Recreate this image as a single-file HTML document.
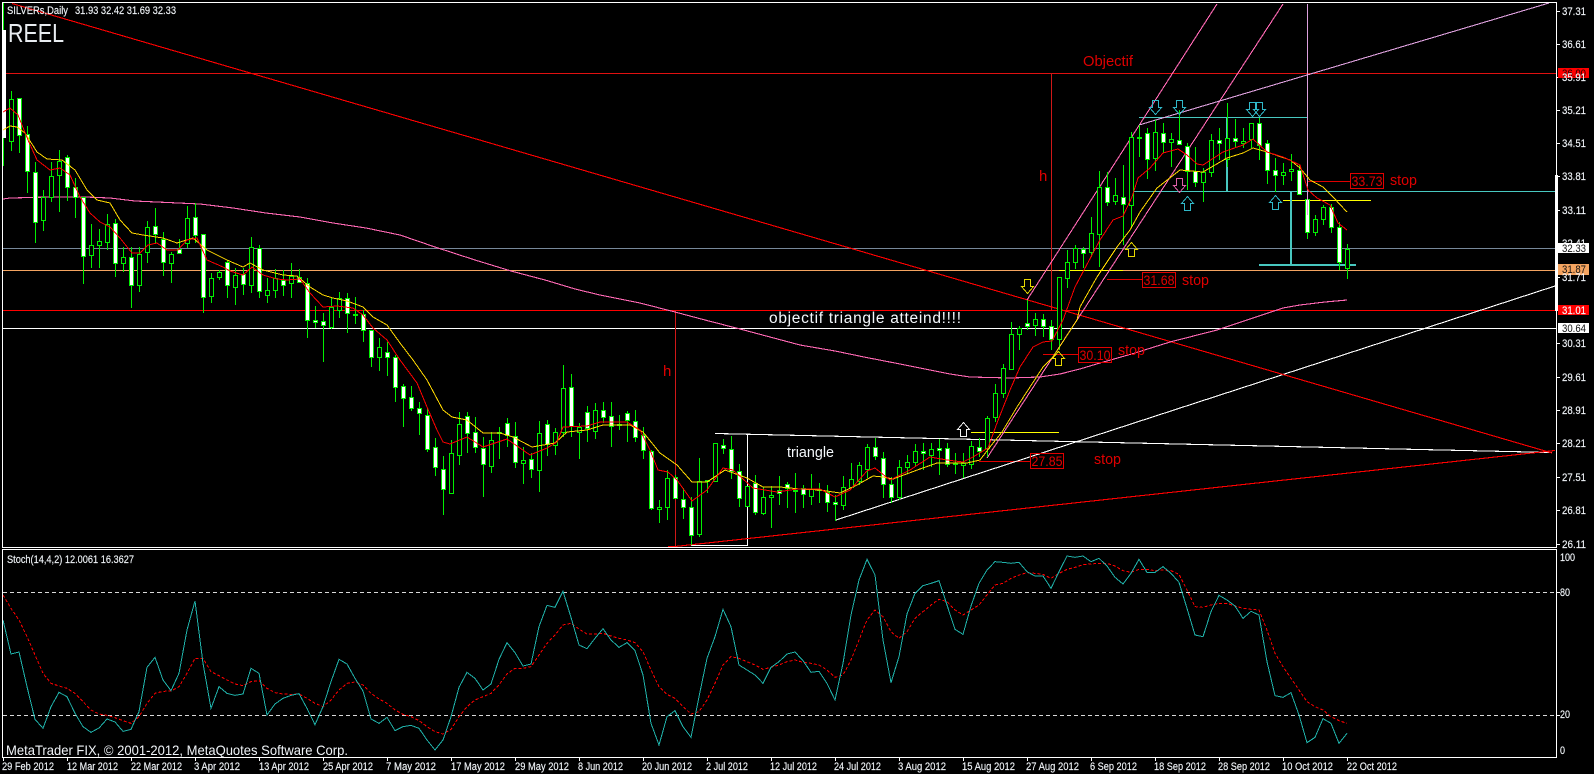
<!DOCTYPE html>
<html><head><meta charset="utf-8"><title>SILVERs Daily</title>
<style>
html,body{margin:0;padding:0;background:#000;width:1594px;height:774px;overflow:hidden}
svg{display:block;position:absolute;left:0;top:0}
text{font-family:"Liberation Sans",sans-serif}
.ax{font-size:11px;fill:#f2f6fa;stroke:#f2f6fa;stroke-width:.15px}
.d{font-size:11px;fill:#f0f4f8;stroke:#f0f4f8;stroke-width:.15px}
.r{font-size:15px;fill:#e00000}
.b{font-size:14px;fill:#e00000}
.w{font-size:15px;fill:#f4f8fc}
</style></head><body>
<svg width="1594" height="774" viewBox="0 0 1594 774" shape-rendering="crispEdges">
<rect width="1594" height="774" fill="#000"/>

<!-- horizontal levels -->
<g fill="none" stroke-width="1">
<path d="M3 73.5H1556" stroke="#e01010"/>
<path d="M3 248.5H1556" stroke="#77889a"/>
<path d="M3 270.5H1556" stroke="#f4a460"/>
<path d="M3 310.5H1556" stroke="#f00"/>
<path d="M3 328.5H1556" stroke="#fff"/>
<path d="M1133 191.5H1555" stroke="#48c8c0"/>
<path d="M1139 117.5H1307" stroke="#48c8c0"/>
<path d="M1283 200.5H1371" stroke="#ffff00"/>
<path d="M1059 270.5H1123" stroke="#ffff00"/>
<path d="M971 432.5H1059" stroke="#ffff00"/>
<!-- verticals -->
<path d="M675.5 310V547" stroke="#d01818"/>
<path d="M1051.5 73V310" stroke="#d01818"/>
<path d="M747.5 435V546" stroke="#fff"/>
<path d="M691 545.5H748" stroke="#fff"/>
<path d="M979 461.5H1030M1043 354.5H1078M1107 279.5H1142M1308 181.5H1350" stroke="#e00000"/>
</g>
<g fill="#48c8c0">
<rect x="1226" y="117" width="2" height="74"/>
<rect x="1290" y="191" width="2" height="74"/>
<rect x="1259" y="264" width="97" height="2"/>
</g>

<!-- trend lines -->
<g fill="none" stroke-width="1.1">
<path d="M715 433.5L1552 452.5" stroke="#fff"/>
<path d="M836 520L1555 286" stroke="#fff"/>
<path d="M12 3.5L1552 453" stroke="#f00"/>
<path d="M668 546.5H675L1555 450.5" stroke="#f00"/>
<path d="M1217 4L1027 300" stroke="#ff69b4"/>
<path d="M1283 4L987 458" stroke="#ff69b4"/>
<path d="M1139 125L1549 3" stroke="#dda0dd"/>
<polyline stroke="#ff69b4" points="3,199 10,198 50,197 85,197 110,198 135,201 200,204 233,208 266,213 300,217 333,223 366,228 400,235 435,247 475,260 511,271 545,280 575,289 600,295 640,303 675,312 705,320 740,329 770,337 800,345 835,351 864,357 900,364 930,370 950,374 970,377 1010,378 1040,377 1060,374 1080,369 1100,363 1135,353 1170,342 1217,330 1250,319 1283,308 1300,305 1325,302 1347,300"/>
</g>

<!-- candle wicks -->
<path fill="none" stroke="#00f000" stroke-width="1" d="M3.5 3V166M11.5 91V151M19.5 98V153M27.5 126V193M35.5 162V243M43.5 190V231M51.5 162V202M59.5 150V212M67.5 155V201M75.5 178V218M83.5 197V284M91.5 224V268M99.5 229V268M107.5 214V250M115.5 219V277M123.5 247V272M131.5 247V308M139.5 247V292M147.5 221V263M155.5 208V243M163.5 232V276M171.5 252V283M179.5 239V254M187.5 206V248M195.5 203V243M203.5 234V313M211.5 273V303M219.5 270V280M227.5 260V298M235.5 268V305M243.5 268V295M251.5 237V293M259.5 245V298M267.5 278V303M275.5 269V298M283.5 270V296M291.5 263V298M299.5 269V283M307.5 278V338M315.5 306V328M323.5 313V362M331.5 298V329M339.5 292V318M347.5 293V333M355.5 297V324M363.5 310V342M371.5 330V367M379.5 338V371M387.5 342V376M395.5 355V402M403.5 384V427M411.5 386V411M419.5 402V435M427.5 408V452M435.5 438V476M443.5 456V515M451.5 440V493M459.5 412V465M467.5 412V453M475.5 417V453M483.5 437V497M491.5 432V473M499.5 427V459M507.5 418V447M515.5 422V468M523.5 447V484M531.5 453V478M539.5 421V492M547.5 420V456M555.5 428V455M563.5 365V437M571.5 374V437M579.5 423V459M587.5 406V442M595.5 403V439M603.5 402V423M611.5 402V447M619.5 415V430M627.5 411V442M635.5 410V442M643.5 427V459M651.5 450V510M659.5 500V523M667.5 470V520M675.5 475V498M683.5 488V519M691.5 497V545M699.5 458V537M707.5 480V493M715.5 443V481M723.5 439V454M731.5 436V479M739.5 464V507M747.5 486V506M755.5 475V515M763.5 487V515M771.5 486V528M779.5 476V505M787.5 482V508M795.5 473V513M803.5 485V508M811.5 474V505M819.5 483V503M827.5 485V512M835.5 495V521M843.5 476V510M851.5 463V488M859.5 462V485M867.5 444V478M875.5 438V460M883.5 452V498M891.5 477V503M899.5 460V500M907.5 455V474M915.5 444V467M923.5 443V470M931.5 443V467M939.5 439V475M947.5 443V467M955.5 453V474M963.5 453V478M971.5 441V469M979.5 438V457M987.5 416V457M995.5 384V422M1003.5 364V398M1011.5 322V369M1019.5 326V350M1027.5 300V330M1035.5 313V336M1043.5 314V337M1051.5 320V350M1059.5 277V350M1067.5 250V288M1075.5 245V269M1083.5 247V268M1091.5 217V257M1099.5 171V267M1107.5 172V206M1115.5 178V205M1123.5 165V245M1131.5 132V228M1139.5 125V157M1147.5 128V179M1155.5 120V171M1163.5 123V153M1171.5 133V167M1179.5 110V145M1187.5 143V190M1195.5 147V187M1203.5 168V202M1211.5 134V177M1219.5 128V160M1227.5 103V167M1235.5 119V148M1243.5 128V148M1251.5 123V148M1259.5 118V160M1267.5 140V184M1275.5 158V192M1283.5 163V185M1291.5 154V181M1299.5 165V195M1307.5 193V239M1315.5 215V236M1323.5 205V225M1331.5 204V233M1339.5 222V270M1347.5 244V279"/>

<!-- bull bodies (hollow) -->
<path fill="#000" stroke="#00f000" stroke-width="1" d="M9.5 99.5h4V141.5h-4zM41.5 197.5h4V220.5h-4zM49.5 176.5h4V197.5h-4zM57.5 161.5h4V175.5h-4zM89.5 245.5h4V255.5h-4zM97.5 241.5h4V245.5h-4zM105.5 224.5h4V242.5h-4zM121.5 257.5h4V263.5h-4zM137.5 254.5h4V285.5h-4zM145.5 227.5h4V252.5h-4zM169.5 254.5h4V263.5h-4zM185.5 218.5h4V243.5h-4zM209.5 278.5h4V296.5h-4zM217.5 272.5h4V277.5h-4zM233.5 275.5h4V287.5h-4zM249.5 247.5h4V285.5h-4zM265.5 290.5h4V295.5h-4zM273.5 278.5h4V290.5h-4zM289.5 276.5h4V283.5h-4zM329.5 307.5h4V327.5h-4zM337.5 298.5h4V310.5h-4zM353.5 314.5h4V315.5h-4zM377.5 347.5h4V357.5h-4zM449.5 453.5h4V493.5h-4zM457.5 424.5h4V455.5h-4zM489.5 440.5h4V466.5h-4zM497.5 432.5h4V433.5h-4zM521.5 460.5h4V463.5h-4zM537.5 433.5h4V470.5h-4zM553.5 432.5h4V445.5h-4zM561.5 388.5h4V432.5h-4zM577.5 427.5h4V432.5h-4zM593.5 410.5h4V431.5h-4zM617.5 424.5h4V425.5h-4zM657.5 507.5h4V509.5h-4zM665.5 478.5h4V507.5h-4zM697.5 481.5h4V534.5h-4zM705.5 480.5h4V481.5h-4zM713.5 443.5h4V481.5h-4zM745.5 486.5h4V506.5h-4zM761.5 497.5h4V513.5h-4zM769.5 495.5h4V497.5h-4zM793.5 490.5h4V491.5h-4zM809.5 489.5h4V496.5h-4zM817.5 489.5h4V490.5h-4zM841.5 487.5h4V505.5h-4zM849.5 479.5h4V487.5h-4zM857.5 465.5h4V481.5h-4zM865.5 447.5h4V469.5h-4zM897.5 467.5h4V497.5h-4zM905.5 462.5h4V467.5h-4zM913.5 451.5h4V462.5h-4zM929.5 449.5h4V455.5h-4zM953.5 463.5h4V464.5h-4zM961.5 463.5h4V465.5h-4zM969.5 446.5h4V464.5h-4zM985.5 418.5h4V448.5h-4zM993.5 393.5h4V417.5h-4zM1001.5 368.5h4V393.5h-4zM1009.5 334.5h4V369.5h-4zM1017.5 328.5h4V334.5h-4zM1033.5 319.5h4V325.5h-4zM1057.5 277.5h4V339.5h-4zM1065.5 262.5h4V278.5h-4zM1073.5 248.5h4V262.5h-4zM1089.5 233.5h4V252.5h-4zM1097.5 187.5h4V234.5h-4zM1113.5 195.5h4V201.5h-4zM1129.5 137.5h4V205.5h-4zM1137.5 137.5h4V138.5h-4zM1153.5 132.5h4V158.5h-4zM1169.5 139.5h4V142.5h-4zM1201.5 172.5h4V182.5h-4zM1209.5 140.5h4V172.5h-4zM1225.5 138.5h4V159.5h-4zM1241.5 141.5h4V143.5h-4zM1249.5 123.5h4V139.5h-4zM1281.5 172.5h4V175.5h-4zM1289.5 169.5h4V171.5h-4zM1313.5 219.5h4V232.5h-4zM1321.5 207.5h4V219.5h-4zM1345.5 249.5h4V268.5h-4z"/>

<!-- bear bodies (white) -->
<path fill="#fff" stroke="#00f000" stroke-width="1" d="M17.5 98.5h4V135.5h-4zM25.5 134.5h4V171.5h-4zM33.5 172.5h4V222.5h-4zM65.5 157.5h4V187.5h-4zM73.5 187.5h4V197.5h-4zM81.5 197.5h4V256.5h-4zM113.5 223.5h4V263.5h-4zM129.5 257.5h4V285.5h-4zM153.5 226.5h4V234.5h-4zM161.5 239.5h4V262.5h-4zM177.5 249.5h4V253.5h-4zM193.5 217.5h4V235.5h-4zM201.5 234.5h4V297.5h-4zM225.5 262.5h4V285.5h-4zM241.5 274.5h4V284.5h-4zM257.5 248.5h4V291.5h-4zM281.5 280.5h4V285.5h-4zM297.5 277.5h4V282.5h-4zM305.5 283.5h4V320.5h-4zM313.5 320.5h4V322.5h-4zM321.5 321.5h4V325.5h-4zM345.5 298.5h4V313.5h-4zM361.5 314.5h4V330.5h-4zM369.5 330.5h4V357.5h-4zM385.5 352.5h4V357.5h-4zM393.5 357.5h4V387.5h-4zM401.5 386.5h4V398.5h-4zM409.5 397.5h4V408.5h-4zM417.5 408.5h4V413.5h-4zM425.5 415.5h4V449.5h-4zM433.5 447.5h4V467.5h-4zM441.5 469.5h4V489.5h-4zM465.5 416.5h4V433.5h-4zM473.5 432.5h4V447.5h-4zM481.5 448.5h4V464.5h-4zM505.5 423.5h4V435.5h-4zM513.5 436.5h4V462.5h-4zM529.5 459.5h4V469.5h-4zM545.5 424.5h4V444.5h-4zM569.5 387.5h4V426.5h-4zM585.5 412.5h4V428.5h-4zM601.5 410.5h4V417.5h-4zM609.5 416.5h4V426.5h-4zM625.5 413.5h4V420.5h-4zM633.5 421.5h4V437.5h-4zM641.5 435.5h4V450.5h-4zM649.5 451.5h4V508.5h-4zM673.5 477.5h4V498.5h-4zM681.5 499.5h4V507.5h-4zM689.5 507.5h4V535.5h-4zM721.5 445.5h4V448.5h-4zM729.5 449.5h4V471.5h-4zM737.5 471.5h4V498.5h-4zM753.5 483.5h4V512.5h-4zM777.5 490.5h4V493.5h-4zM785.5 484.5h4V488.5h-4zM801.5 488.5h4V494.5h-4zM825.5 492.5h4V502.5h-4zM833.5 502.5h4V504.5h-4zM873.5 447.5h4V456.5h-4zM881.5 458.5h4V484.5h-4zM889.5 484.5h4V497.5h-4zM921.5 451.5h4V453.5h-4zM937.5 448.5h4V450.5h-4zM945.5 448.5h4V464.5h-4zM977.5 447.5h4V451.5h-4zM1025.5 323.5h4V326.5h-4zM1041.5 319.5h4V326.5h-4zM1049.5 326.5h4V339.5h-4zM1081.5 249.5h4V253.5h-4zM1105.5 187.5h4V202.5h-4zM1121.5 197.5h4V204.5h-4zM1145.5 133.5h4V159.5h-4zM1161.5 133.5h4V142.5h-4zM1177.5 140.5h4V144.5h-4zM1185.5 146.5h4V171.5h-4zM1193.5 171.5h4V182.5h-4zM1217.5 140.5h4V143.5h-4zM1233.5 138.5h4V141.5h-4zM1257.5 123.5h4V145.5h-4zM1265.5 143.5h4V170.5h-4zM1273.5 170.5h4V175.5h-4zM1297.5 170.5h4V194.5h-4zM1305.5 199.5h4V232.5h-4zM1329.5 207.5h4V227.5h-4zM1337.5 227.5h4V262.5h-4z"/>
<rect x="3" y="30" width="3" height="108" fill="#fff"/>
<path d="M1307.5 4V215" stroke="#dda0dd" fill="none"/>

<!-- moving averages -->
<polyline fill="none" stroke="#ffd800" stroke-width="1" points="3,130 10,126 17,127 25,133 37,152 47,159 62,160 75,170 87,190 97,200 110,203 120,220 132,233 143,235 163,238 177,243 193,238 207,250 227,260 243,267 250,263 263,270 283,275 297,276 310,287 323,295 333,298 347,301 363,307 373,317 387,325 400,343 413,360 427,380 443,410 452,417 467,420 483,433 500,433 513,437 532,447 555,443 567,432 587,430 603,425 630,425 643,432 660,453 677,465 692,482 707,482 725,470 747,478 763,487 780,487 800,489 820,490 840,493 857,485 873,476 883,477 893,479 920,469 937,463 957,463 967,463 980,460 990,447 1002,432 1017,407 1030,387 1043,367 1053,357 1077,320 1080,307 1097,277 1117,247 1130,230 1140,212 1157,188 1180,170 1203,172 1227,158 1243,153 1253,148 1267,152 1290,160 1300,168 1310,180 1323,187 1333,197 1347,212"/>
<polyline fill="none" stroke="#f00" stroke-width="1" points="3,112 10,108 18,115 28,140 37,160 50,170 60,168 70,175 80,197 90,213 100,222 110,227 120,238 132,253 140,253 148,245 157,243 167,250 178,250 187,240 197,238 207,260 223,267 230,271 243,275 252,267 263,275 277,279 287,280 300,279 310,293 323,307 337,306 353,308 363,315 373,328 387,340 400,360 417,383 427,407 437,430 443,442 450,444 467,437 483,447 507,439 530,455 547,448 557,442 563,427 587,426 600,422 627,422 640,430 650,450 658,470 668,472 677,480 692,501 707,490 723,468 733,470 753,488 777,492 797,489 820,489 835,497 850,490 867,471 875,468 890,480 910,470 930,457 947,460 963,462 973,457 988,448 997,423 1010,390 1020,367 1033,347 1043,342 1052,341 1063,320 1075,287 1093,253 1100,240 1113,220 1123,216 1132,197 1138,178 1150,168 1163,153 1178,149 1187,155 1197,164 1203,165 1223,152 1243,145 1253,139 1267,152 1283,157 1300,165 1308,190 1317,198 1330,205 1338,223 1347,230"/>

<!-- arrows -->
<g fill="none" stroke-width="1">
<path stroke="#e8d800" d="M1024.5 279.5h6v7h3l-6 7-6-7h3z"/>
<path stroke="#e8d800" d="M1128.5 256.5h6v-7h3l-6-7-6 7h3z"/>
<path stroke="#e8d800" d="M1055.5 365.5h6v-7h3l-6-7-6 7h3z"/>
<path stroke="#f4f4f4" d="M960.5 436.5h6v-7h3l-6-7-6 7h3z"/>
<path stroke="#30b8c8" d="M1152.5 100.5h6v7h3l-6 7-6-7h3z"/>
<path stroke="#30b8c8" d="M1176.5 100.5h6v7h3l-6 7-6-7h3z"/>
<path stroke="#30b8c8" d="M1249.5 102.5h6v7h3l-6 7-6-7h3z"/>
<path stroke="#30b8c8" d="M1256.5 102.5h6v7h3l-6 7-6-7h3z"/>
<path stroke="#e060a8" d="M1176.5 178.5h6v7h3l-6 7-6-7h3z"/>
<path stroke="#30b8c8" d="M1184.5 210.5h6v-7h3l-6-7-6 7h3z"/>
<path stroke="#30b8c8" d="M1272.5 209.5h6v-7h3l-6-7-6 7h3z"/>
</g>

<!-- chart text -->
<text x="7" y="14" class="d" textLength="61" lengthAdjust="spacingAndGlyphs">SILVERs,Daily</text>
<text x="75" y="14" class="d" textLength="101" lengthAdjust="spacingAndGlyphs">31.93 32.42 31.69 32.33</text>
<text x="8" y="42" font-size="26" fill="#e8ecf0" textLength="56" lengthAdjust="spacingAndGlyphs">REEL</text>
<text x="1083" y="66" class="r" textLength="50" lengthAdjust="spacingAndGlyphs">Objectif</text>
<text x="663" y="376" class="r">h</text>
<text x="1039" y="181" class="r">h</text>
<text x="769" y="323" style="font-size:15.5px;fill:#f4f8fc" textLength="192" lengthAdjust="spacing">objectif triangle atteind!!!!</text>
<text x="787" y="457" class="w" textLength="47" lengthAdjust="spacingAndGlyphs">triangle</text>

<g fill="none" stroke="#e00000" stroke-width="1">
<rect x="1142.5" y="272.5" width="33" height="15"/>
<rect x="1078.5" y="347.5" width="33" height="15"/>
<rect x="1350.5" y="173.5" width="33" height="15"/>
<rect x="1030.5" y="453.5" width="33" height="15"/>
</g>
<text x="1143.5" y="285" class="b" textLength="31" lengthAdjust="spacingAndGlyphs">31.68</text>
<text x="1079.5" y="360" class="b" textLength="31" lengthAdjust="spacingAndGlyphs">30.10</text>
<text x="1351.5" y="186" class="b" textLength="31" lengthAdjust="spacingAndGlyphs">33.73</text>
<text x="1031.5" y="466" class="b" textLength="31" lengthAdjust="spacingAndGlyphs">27.85</text>
<text x="1182" y="285" class="r" textLength="27" lengthAdjust="spacingAndGlyphs">stop</text>
<text x="1118" y="355" class="r" textLength="27" lengthAdjust="spacingAndGlyphs">stop</text>
<text x="1390" y="185" class="r" textLength="27" lengthAdjust="spacingAndGlyphs">stop</text>
<text x="1094" y="464" class="r" textLength="27" lengthAdjust="spacingAndGlyphs">stop</text>

<!-- sub window -->
<g fill="none" stroke="#d8d8d8" stroke-width="1" stroke-dasharray="4 3">
<path d="M3 592.5H1556"/><path d="M3 715.5H1556"/>
</g>
<g transform="translate(0,530) scale(1,0.33333)" fill="none">
<polyline vector-effect="non-scaling-stroke" stroke="#f00" stroke-width="1" stroke-dasharray="3 2" points="3,195 11,235 19,270 27,320 35,375 43,430 51,460 59,468 67,475 75,490 83,515 91,540 99,552 107,556 115,563 123,572 131,580 139,560 147,520 155,490 163,484 171,483 179,470 187,430 195,385 203,385 211,425 219,437 227,450 235,462 243,467 251,455 259,452 267,475 275,488 283,492 291,493 299,492 307,505 315,520 323,530 331,510 339,480 347,460 355,456 363,465 371,490 379,507 387,520 395,540 403,553 411,560 419,572 427,590 435,605 443,612 451,598 459,560 467,530 475,510 483,500 491,490 499,465 507,432 515,415 523,415 531,410 539,375 547,340 555,315 563,285 571,280 579,297 587,312 595,312 603,310 611,318 619,325 627,330 635,338 643,365 651,420 659,470 667,493 675,505 683,530 691,552 699,545 707,510 715,460 723,405 731,380 739,385 747,395 755,405 763,418 771,412 779,405 787,395 795,390 803,397 811,400 819,405 827,420 835,442 843,435 851,390 859,330 867,270 875,240 883,260 891,305 899,325 907,305 915,265 923,245 931,225 939,208 947,215 955,240 963,255 971,240 979,225 987,195 995,165 1003,160 1011,145 1019,135 1027,128 1035,130 1043,133 1051,145 1059,130 1067,118 1075,112 1083,104 1091,102 1099,100 1107,100 1115,108 1123,122 1131,127 1139,118 1147,118 1155,122 1163,120 1171,122 1179,133 1187,180 1195,230 1203,232 1211,225 1219,220 1227,220 1235,228 1243,235 1251,238 1259,240 1267,300 1275,370 1283,410 1291,445 1299,480 1307,515 1315,530 1323,540 1331,560 1339,572 1347,580"/>
<polyline vector-effect="non-scaling-stroke" stroke="#20b2aa" stroke-width="1" points="3,270 11,372 19,366 27,470 35,568 43,595 51,530 59,487 67,500 75,550 83,590 91,607 99,594 107,567 115,576 123,604 131,598 139,545 147,412 155,382 163,450 171,482 179,430 187,300 195,213 203,400 211,535 219,470 227,490 235,496 243,492 251,415 259,430 267,555 275,522 283,505 291,496 299,491 307,535 315,584 323,530 331,455 339,388 347,402 355,445 363,483 371,567 379,580 387,562 395,602 403,590 411,586 419,595 427,630 435,660 443,630 451,560 459,472 467,427 475,445 483,480 491,462 499,388 507,338 515,368 523,408 531,402 539,290 547,226 555,232 563,184 571,262 579,345 587,356 595,325 603,296 611,330 619,352 627,338 635,362 643,435 651,580 659,645 667,560 675,542 683,590 691,622 699,500 707,385 715,320 723,238 731,290 739,405 747,420 755,435 763,460 771,412 779,395 787,372 795,366 803,392 811,427 819,424 827,460 835,510 843,400 851,255 859,150 867,88 875,135 883,330 891,458 899,380 907,252 915,190 923,167 931,160 939,152 947,225 955,298 963,313 971,228 979,160 987,120 995,95 1003,97 1011,100 1019,97 1027,125 1035,138 1043,138 1051,175 1059,125 1067,78 1075,82 1083,78 1091,95 1099,85 1107,108 1115,142 1123,162 1131,130 1139,88 1147,127 1155,127 1163,110 1171,130 1179,157 1187,235 1195,315 1203,320 1211,245 1219,196 1227,210 1235,228 1243,265 1251,244 1259,255 1267,395 1275,497 1283,502 1291,488 1299,555 1307,638 1315,622 1323,566 1331,580 1339,640 1347,610"/>
</g>
<text x="7" y="563" class="d" textLength="127" lengthAdjust="spacingAndGlyphs">Stoch(14,4,2) 12.0061 16.3627</text>
<text x="6" y="755" font-size="14" fill="#f0f4f8" textLength="342" lengthAdjust="spacingAndGlyphs">MetaTrader FIX, © 2001-2012, MetaQuotes Software Corp.</text>

<!-- frames -->
<g fill="none" stroke="#fff" stroke-width="1">
<path d="M2.5 2.5H1556.5V547.5H2.5z"/>
<path d="M2.5 549.5H1556.5V757.5H2.5z"/>
<path d="M1557 11.5h3M1557 44.5h3M1557 77.5h3M1557 110.5h3M1557 143.5h3M1557 176.5h3M1557 210.5h3M1557 243.5h3M1557 277.5h3M1557 310.5h3M1557 343.5h3M1557 377.5h3M1557 410.5h3M1557 443.5h3M1557 477.5h3M1557 510.5h3M1557 544.5h3M1557 592.5h3M1557 715.5h3"/>
<path d="M3.5 758v3M67.5 758v3M131.5 758v3M195.5 758v3M259.5 758v3M323.5 758v3M387.5 758v3M451.5 758v3M515.5 758v3M579.5 758v3M643.5 758v3M707.5 758v3M771.5 758v3M835.5 758v3M899.5 758v3M963.5 758v3M1027.5 758v3M1091.5 758v3M1155.5 758v3M1219.5 758v3M1283.5 758v3M1347.5 758v3"/>
</g>
<rect x="1555" y="175" width="3" height="136" fill="#fff"/>

<!-- price axis -->
<g>
<text x="1562" y="15" class="ax" textLength="24" lengthAdjust="spacingAndGlyphs">37.31</text>
<text x="1562" y="48" class="ax" textLength="24" lengthAdjust="spacingAndGlyphs">36.61</text>
<rect x="1558" y="68" width="31" height="10" fill="#f00"/>
<text x="1562" y="77" font-size="11" fill="#200" textLength="24" lengthAdjust="spacingAndGlyphs">36.00</text>
<text x="1562" y="81" class="ax" textLength="24" lengthAdjust="spacingAndGlyphs">35.91</text>
<text x="1562" y="114" class="ax" textLength="24" lengthAdjust="spacingAndGlyphs">35.21</text>
<text x="1562" y="147" class="ax" textLength="24" lengthAdjust="spacingAndGlyphs">34.51</text>
<text x="1562" y="180" class="ax" textLength="24" lengthAdjust="spacingAndGlyphs">33.81</text>
<text x="1562" y="214" class="ax" textLength="24" lengthAdjust="spacingAndGlyphs">33.11</text>
<text x="1562" y="247" class="ax" textLength="24" lengthAdjust="spacingAndGlyphs">32.41</text>
<rect x="1558" y="243" width="31" height="10" fill="#fff"/>
<text x="1562" y="252" font-size="11" fill="#111" textLength="24" lengthAdjust="spacingAndGlyphs">32.33</text>
<rect x="1558" y="264" width="31" height="11" fill="#f4a460"/>
<text x="1562" y="273" font-size="11" fill="#111" textLength="24" lengthAdjust="spacingAndGlyphs">31.87</text>
<text x="1562" y="281" class="ax" textLength="24" lengthAdjust="spacingAndGlyphs">31.71</text>
<rect x="1558" y="305" width="31" height="10" fill="#f00"/>
<text x="1562" y="314" class="ax" textLength="24" lengthAdjust="spacingAndGlyphs">31.01</text>
<rect x="1558" y="323" width="31" height="10" fill="#fff"/>
<text x="1562" y="332" font-size="11" fill="#111" textLength="24" lengthAdjust="spacingAndGlyphs">30.64</text>
<text x="1562" y="347" class="ax" textLength="24" lengthAdjust="spacingAndGlyphs">30.31</text>
<text x="1562" y="381" class="ax" textLength="24" lengthAdjust="spacingAndGlyphs">29.61</text>
<text x="1562" y="414" class="ax" textLength="24" lengthAdjust="spacingAndGlyphs">28.91</text>
<text x="1562" y="447" class="ax" textLength="24" lengthAdjust="spacingAndGlyphs">28.21</text>
<text x="1562" y="481" class="ax" textLength="24" lengthAdjust="spacingAndGlyphs">27.51</text>
<text x="1562" y="514" class="ax" textLength="24" lengthAdjust="spacingAndGlyphs">26.81</text>
<text x="1562" y="548" class="ax" textLength="24" lengthAdjust="spacingAndGlyphs">26.11</text>
<text x="1560" y="561" class="ax" textLength="15" lengthAdjust="spacingAndGlyphs">100</text>
<text x="1560" y="596" class="ax" textLength="10" lengthAdjust="spacingAndGlyphs">80</text>
<text x="1560" y="718" class="ax" textLength="10" lengthAdjust="spacingAndGlyphs">20</text>
<text x="1560" y="754" class="ax" textLength="5" lengthAdjust="spacingAndGlyphs">0</text>
</g>

<!-- time axis -->
<text x="2" y="770" class="d" textLength="52" lengthAdjust="spacingAndGlyphs">29 Feb 2012</text>
<text x="67" y="770" class="d" textLength="51" lengthAdjust="spacingAndGlyphs">12 Mar 2012</text>
<text x="131" y="770" class="d" textLength="51" lengthAdjust="spacingAndGlyphs">22 Mar 2012</text>
<text x="194" y="770" class="d" textLength="46" lengthAdjust="spacingAndGlyphs">3 Apr 2012</text>
<text x="259" y="770" class="d" textLength="50" lengthAdjust="spacingAndGlyphs">13 Apr 2012</text>
<text x="323" y="770" class="d" textLength="50" lengthAdjust="spacingAndGlyphs">25 Apr 2012</text>
<text x="386" y="770" class="d" textLength="50" lengthAdjust="spacingAndGlyphs">7 May 2012</text>
<text x="451" y="770" class="d" textLength="54" lengthAdjust="spacingAndGlyphs">17 May 2012</text>
<text x="515" y="770" class="d" textLength="54" lengthAdjust="spacingAndGlyphs">29 May 2012</text>
<text x="578" y="770" class="d" textLength="45" lengthAdjust="spacingAndGlyphs">8 Jun 2012</text>
<text x="642" y="770" class="d" textLength="50" lengthAdjust="spacingAndGlyphs">20 Jun 2012</text>
<text x="706" y="770" class="d" textLength="42" lengthAdjust="spacingAndGlyphs">2 Jul 2012</text>
<text x="770" y="770" class="d" textLength="47" lengthAdjust="spacingAndGlyphs">12 Jul 2012</text>
<text x="834" y="770" class="d" textLength="47" lengthAdjust="spacingAndGlyphs">24 Jul 2012</text>
<text x="898" y="770" class="d" textLength="48" lengthAdjust="spacingAndGlyphs">3 Aug 2012</text>
<text x="962" y="770" class="d" textLength="53" lengthAdjust="spacingAndGlyphs">15 Aug 2012</text>
<text x="1026" y="770" class="d" textLength="53" lengthAdjust="spacingAndGlyphs">27 Aug 2012</text>
<text x="1090" y="770" class="d" textLength="47" lengthAdjust="spacingAndGlyphs">6 Sep 2012</text>
<text x="1154" y="770" class="d" textLength="52" lengthAdjust="spacingAndGlyphs">18 Sep 2012</text>
<text x="1218" y="770" class="d" textLength="52" lengthAdjust="spacingAndGlyphs">28 Sep 2012</text>
<text x="1282" y="770" class="d" textLength="51" lengthAdjust="spacingAndGlyphs">10 Oct 2012</text>
<text x="1347" y="770" class="d" textLength="50" lengthAdjust="spacingAndGlyphs">22 Oct 2012</text>
</svg>
</body></html>
